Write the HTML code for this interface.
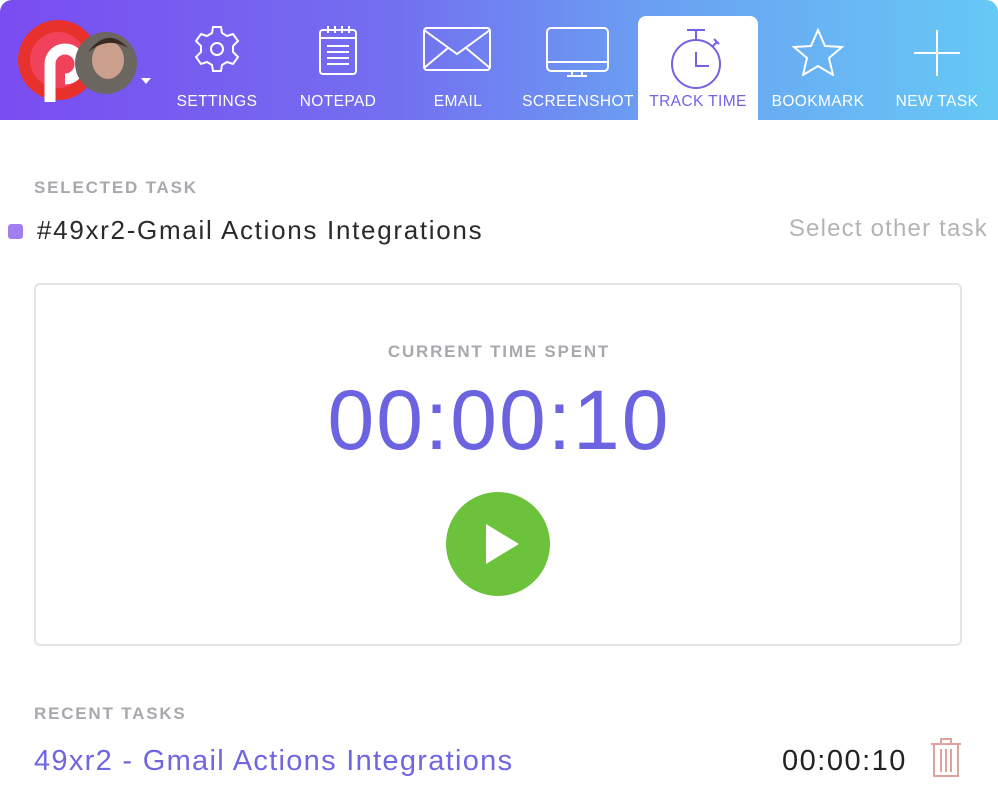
<!DOCTYPE html>
<html><head><meta charset="utf-8"><style>
*{margin:0;padding:0;box-sizing:border-box}
body{width:998px;height:804px;background:#fff;font-family:"Liberation Sans",sans-serif;position:relative;overflow:hidden}
.hdr{position:absolute;left:0;top:0;width:998px;height:120px;background:linear-gradient(90deg,#7a4cf1 0%,#7370f0 40%,#6a9ff2 65%,#66c9f5 100%);border-radius:12px 12px 0 0}
.tab{position:absolute;top:16px;width:120px;height:104px;text-align:center;color:#fff;font-size:15.5px}
.tab svg{position:absolute;left:50%;transform:translateX(-50%);top:8px}
.tab span{position:absolute;left:0;right:0;top:77px;letter-spacing:.4px}
.act{background:#fff;border-radius:8px 8px 0 0;color:#7163e4}
.lbl{position:absolute;font-size:17px;color:#a8a8ae;letter-spacing:1.8px;font-weight:bold}
</style></head><body>
<div class="hdr">
 <svg style="position:absolute;left:16px;top:18px" width="140" height="84">
  <circle cx="42" cy="42" r="40" fill="#e8302c"/>
  <circle cx="42" cy="42" r="28" fill="#f0425a"/>
  <path d="M34 84 V46 a15 15 0 1 1 15 15" stroke="#fff" stroke-width="11" fill="none"/>
  <circle cx="90" cy="45" r="31" fill="#6b6660"/>
  <ellipse cx="92" cy="42" rx="16" ry="19" fill="#caa08c"/>
  <path d="M72 34 q20-26 40-4 q-20-12-40 4z" fill="#3a2a22"/>
  <path d="M125 60 l10 0 l-5 6z" fill="#fff"/>
 </svg>
 <div class="tab" style="left:157px"><svg width="50" height="50" viewBox="0 0 50 50" fill="none" stroke="#fff" stroke-width="2"><path d="M21 3h8l1 6 5 3 6-2 5 7-5 5v6l5 5-5 7-6-2-5 3-1 6h-8l-1-6-5-3-6 2-5-7 5-5v-6l-5-5 5-7 6 2 5-3z"/><circle cx="25" cy="25" r="6"/></svg><span>SETTINGS</span></div>
 <div class="tab" style="left:278px"><svg width="40" height="52" viewBox="0 0 40 52" fill="none" stroke="#fff" stroke-width="2"><rect x="2" y="6" width="36" height="44" rx="3"/><path d="M2 14h36M10 2v7M17 2v7M24 2v7M31 2v7M9 22h22M9 28h22M9 34h22M9 40h22"/></svg><span>NOTEPAD</span></div>
 <div class="tab" style="left:398px"><svg width="70" height="50" viewBox="0 0 70 50" fill="none" stroke="#fff" stroke-width="2"><rect x="1" y="4" width="66" height="42" rx="3"/><path d="M1 6l33 24 33-24M1 44l24-20M67 44l-24-20"/></svg><span>EMAIL</span></div>
 <div class="tab" style="left:518px"><svg width="64" height="54" viewBox="0 0 64 54" fill="none" stroke="#fff" stroke-width="2"><rect x="1" y="4" width="61" height="43" rx="4"/><path d="M1 38h61M26 47v5M36 47v5M21 52h20"/></svg><span>SCREENSHOT</span></div>
 <div class="tab act" style="left:638px"><svg width="54" height="66" viewBox="0 0 54 66" fill="none" stroke="#7163e4" stroke-width="2"><circle cx="25" cy="40" r="24"/><path d="M25 16V6M16 6h18M25 28v14h13M41 23l5-5M43 15l5 5"/></svg><span>TRACK TIME</span></div>
 <div class="tab" style="left:758px"><svg width="54" height="52" viewBox="0 0 54 52" fill="none" stroke="#fff" stroke-width="2"><path d="M27 6l7 16 17 1-13 11 4 17-15-9-15 9 4-17L3 23l17-1z"/></svg><span>BOOKMARK</span></div>
 <div class="tab" style="left:877px"><svg width="50" height="52" viewBox="0 0 50 52" fill="none" stroke="#fff" stroke-width="2"><path d="M25 6v46M2 29h46"/></svg><span>NEW TASK</span></div>
</div>
<div class="lbl" style="left:34px;top:178px">SELECTED TASK</div>
<div style="position:absolute;left:8px;top:224px;width:15px;height:15px;border-radius:3px;background:#a27ef0"></div>
<div style="position:absolute;left:37px;top:215px;font-size:26px;letter-spacing:1.7px;color:#2a2a2a">#49xr2-Gmail Actions Integrations</div>
<div style="position:absolute;right:10px;top:215px;font-size:24px;letter-spacing:1.2px;color:#b4b4b8">Select other task</div>
<div style="position:absolute;left:34px;top:283px;width:928px;height:363px;border:2px solid #e4e4e6;border-radius:6px"></div>
<div class="lbl" style="left:0;width:998px;text-align:center;top:342px">CURRENT TIME SPENT</div>
<div style="position:absolute;left:0;width:998px;text-align:center;top:372px;font-size:84px;letter-spacing:2px;color:#6c63e0">00:00:10</div>
<svg style="position:absolute;left:446px;top:492px" width="104" height="104"><circle cx="52" cy="52" r="52" fill="#6cc23a"/><path d="M40 32v40l33-20z" fill="#fff"/></svg>
<div class="lbl" style="left:34px;top:704px">RECENT TASKS</div>
<div style="position:absolute;left:34px;top:745px;font-size:29px;letter-spacing:1.3px;color:#6f66e2">49xr2 - Gmail Actions Integrations</div>
<div style="position:absolute;left:782px;top:745px;font-size:29px;letter-spacing:1.5px;color:#222">00:00:10</div>
<svg style="position:absolute;left:929px;top:736px" width="36" height="42" viewBox="0 0 36 42" fill="none" stroke="#e0a29c" stroke-width="2"><path d="M2 8h30M12 8V3h10v5M5 8v32h24V8M12 13v23M17 13v23M22 13v23"/></svg>
</body></html>
